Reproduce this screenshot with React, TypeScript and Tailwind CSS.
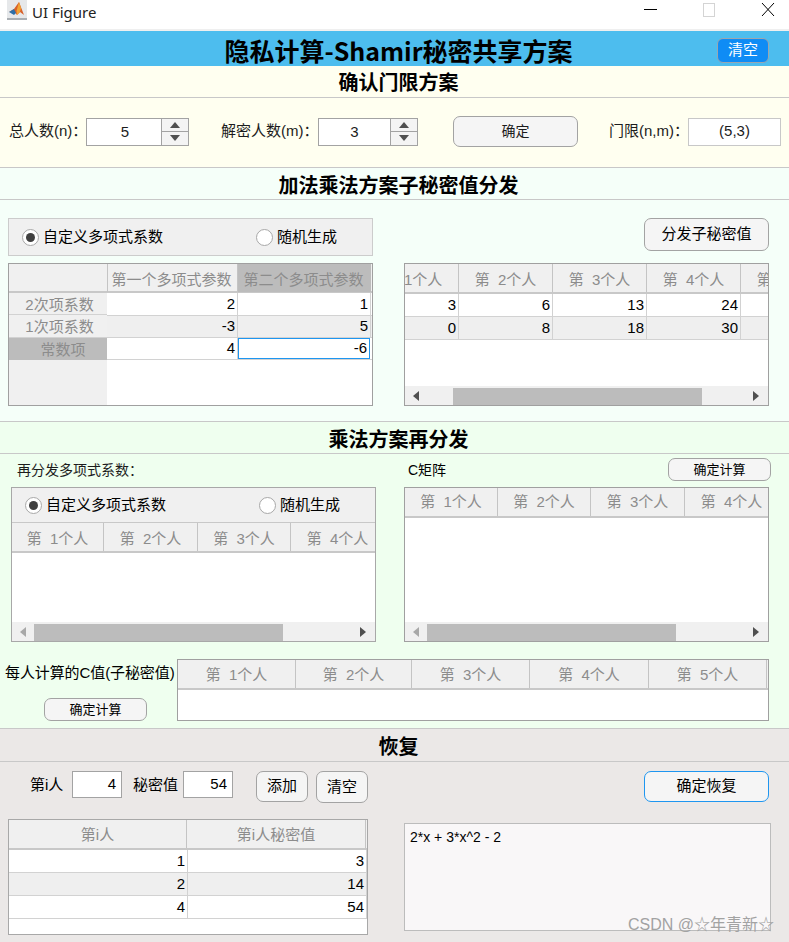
import React from "react";

function Caret({ dir, cls = "fill-[#505050]" }: { dir: "l" | "r" | "u" | "d"; cls?: string }) {
  const pts = { l: "7,0 7,10 1,5", r: "1,0 1,10 7,5", u: "0,7 10,7 5,1", d: "0,1 10,1 5,7" }[dir];
  return (
    <svg width={dir === "l" || dir === "r" ? 8 : 10} height={dir === "l" || dir === "r" ? 10 : 8} className={cls}>
      <polygon points={pts} />
    </svg>
  );
}

function Spinner({ value, widthCls, textCls }: { value: string; widthCls: string; textCls: string }) {
  return (
    <div className={`flex h-[28px] border border-[#a3a3a3] bg-white ${widthCls}`}>
      <div className={`flex h-full flex-1 items-center justify-center pt-[2px] text-[15px] ${textCls}`}>{value}</div>
      <div className="flex w-[27px] flex-col border-l border-[#a3a3a3] bg-[#f4f4f4]">
        <div className="flex h-[13px] items-center justify-center border-b border-[#a3a3a3]"><Caret dir="u" /></div>
        <div className="flex flex-1 items-center justify-center"><Caret dir="d" /></div>
      </div>
    </div>
  );
}

function Btn({ children, cls }: { children: React.ReactNode; cls: string }) {
  return (
    <div className={`flex shrink-0 items-center justify-center rounded-[7px] border border-[#a3a3a3] bg-[#f5f5f5] ${cls}`}>{children}</div>
  );
}

function Radio({ on }: { on?: boolean }) {
  return (
    <span className="flex h-[17px] w-[17px] shrink-0 items-center justify-center rounded-full border border-[#a8a8a8] bg-white">
      {on && <span className="h-[9px] w-[9px] rounded-full bg-[#404040]" />}
    </span>
  );
}

function RadioBar({ second, height, border }: { second: string; height: string; border: string }) {
  return (
    <div className={`flex shrink-0 items-center bg-[#f0f0f0] text-[15px] ${height} ${border}`}>
      <div className="ml-[13px] flex w-[234px] items-center gap-[4px] pt-[1px]"><Radio on /><span>自定义多项式系数</span></div>
      <div className="flex items-center gap-[4px]"><Radio /><span>{second}</span></div>
    </div>
  );
}

function PeopleHeader({ cols, shift = "", textPad = "pt-[3px]" }: { cols: [number, string][]; shift?: string; textPad?: string }) {
  return (
    <div className={`flex h-[30px] shrink-0 items-start overflow-hidden border-b-2 border-[#c8c8c8] bg-[#f0f0f0] ${shift}`}>
      {cols.map(([w, t], i) => (
        <div key={i} className={`flex h-[28px] shrink-0 items-center justify-center whitespace-pre border-r border-[#c4c4c4] text-[15px] text-[#8c8c8c] ${textPad}`} style={{ width: w }}>{t}</div>
      ))}
    </div>
  );
}

function Scrollbar({ thumb, offset, leftDim }: { thumb: string; offset: string; leftDim?: boolean }) {
  return (
    <div className="flex h-[19px] shrink-0 items-center bg-[#f0f0f0]">
      <div className="flex w-[22px] shrink-0 items-center justify-center">
        <Caret dir="l" cls={leftDim ? "fill-[#a8a8a8]" : "fill-[#505050]"} />
      </div>
      <div className={`flex-1 ${offset}`}>
        <div className={`mt-[2px] h-[17px] bg-[#bcbcbc] ${thumb}`} />
      </div>
      <div className="flex w-[24px] shrink-0 items-center justify-center"><Caret dir="r" /></div>
    </div>
  );
}

const people = (widths: number[]): [number, string][] =>
  widths.map((w, i) => [w, `第  ${i + 1}个人`] as [number, string]);

function CellRow({ vals, widths, shade, shift = "" }: { vals: string[]; widths: number[]; shade?: boolean; shift?: string }) {
  return (
    <div className={`flex h-[23px] items-center overflow-hidden border-b border-[#d2d2d2] ${shade ? "bg-[#efefef]" : "bg-white"} ${shift}`}>
      {vals.map((v, i) => (
        <div key={i} className="flex h-full shrink-0 items-center justify-end border-r border-[#d2d2d2] pr-[2px] text-[15px]" style={{ width: widths[i] }}>{v}</div>
      ))}
    </div>
  );
}

function SectionHead({ title, cls }: { title: string; cls: string }) {
  return (
    <div className={`flex items-center justify-center border-b border-[#c8c8c8] pl-[8px] text-[20px] font-bold ${cls}`}>{title}</div>
  );
}

function Logo() {
  return (
    <svg width="20" height="20" viewBox="0 0 20 20">
      <rect x="0" y="0" width="20" height="20" fill="#e6e8ea" />
      <rect x="0" y="18" width="20" height="2" fill="#a9aeb3" />
      <path d="M2 12 L7 9 L12 2 L17 15 L13 12 L10 15 L7 11.5 Z" fill="#d8602a" />
      <path d="M2 12 L7 9 L9 13 L7 15 Z" fill="#2d6fa8" />
      <path d="M12 2 L14 8 L13 12 L10 15 L9.5 11 Z" fill="#f2a534" />
    </svg>
  );
}

export default function App() {
  return (
    <div className="relative h-[942px] w-[789px] overflow-hidden bg-white font-['Liberation_Sans','Noto_Sans_CJK_SC',sans-serif] text-black">
      {/* window chrome */}
      <div className="flex h-[31px] items-start border-b-2 border-[#efefef] bg-white">
        <div className="ml-[7px]"><Logo /></div>
        <span className="ml-[5px] mt-[1px] font-['Noto_Sans','Liberation_Sans',sans-serif] text-[15px] text-[#222]">UI Figure</span>
        <div className="ml-auto flex">
          <div className="mr-[46px] mt-[9px] h-[1px] w-[13px] bg-black" />
          <div className="mr-[46px] mt-[3px] h-[14px] w-[12px] border border-[#d4d4d4]" />
          <svg width="14" height="15" className="mr-[14px] mt-[2px] stroke-black" fill="none"><path d="M1 1 L13 14 M13 1 L1 14" /></svg>
        </div>
      </div>

      {/* title */}
      <div className="relative flex h-[35px] items-center justify-center bg-[#4dbdee] pl-[8px]">
        <span className="mt-[5px] font-['Noto_Sans_CJK_SC',sans-serif] text-[25px] font-bold">隐私计算-Shamir秘密共享方案</span>
        <div className="absolute left-[717px] top-[7px] flex h-[25px] w-[52px] items-center justify-center rounded-[6px] border border-[#9aa6b0] bg-[#0f8cf5] text-[15px] text-white">清空</div>
      </div>

      {/* threshold */}
      <section className="h-[102px] border-b border-[#c8c8c8] bg-[#fffff0]">
        <SectionHead title="确认门限方案" cls="h-[32px] pt-[3px]" />
        <div className="flex items-center pl-[9px] pt-[18px] text-[15px] text-[#1c1c1c]">
          <span className="w-[77px] whitespace-nowrap">总人数(n)：</span>
          <Spinner value="5" widthCls="w-[103px]" textCls="pl-[2px]" />
          <span className="ml-[32px] w-[97px] whitespace-nowrap">解密人数(m)：</span>
          <Spinner value="3" widthCls="w-[100px]" textCls="" />
          <Btn cls="ml-[35px] h-[31px] w-[125px] text-[14px]">确定</Btn>
          <span className="ml-[31px] w-[79px] whitespace-nowrap">门限(n,m)：</span>
          <div className="flex h-[28px] w-[93px] items-center justify-center border border-[#c8c8c8] bg-white text-[15px]">(5,3)</div>
        </div>
      </section>

      {/* distribute */}
      <section className="h-[254px] border-b border-[#c8c8c8] bg-[#f5fff9]">
        <SectionHead title="加法乘法方案子秘密值分发" cls="h-[32px] pt-[4px]" />
        <div className="flex gap-[31px] pl-[8px] pt-[18px]">
          <div className="w-[365px]">
            <RadioBar second="随机生成" height="h-[38px]" border="border border-[#cccccc]" />
            <div className="mt-[7px] flex h-[143px] border border-[#a0a0a0] bg-white">
              <div className="flex w-[98px] shrink-0 flex-col bg-[#f0f0f0] text-[15px] text-[#8c8c8c]">
                <div className="h-[29px] border-b-2 border-[#c8c8c8]" />
                <div className="flex h-[22px] items-center justify-center border-b border-[#d2d2d2] pl-[3px] pt-[3px]">2次项系数</div>
                <div className="flex h-[23px] items-center justify-center border-b border-[#d2d2d2] pl-[3px] pt-[2px]">1次项系数</div>
                <div className="flex h-[22px] items-center justify-center bg-[#bcbcbc] pl-[10px] pt-[2px]">常数项</div>
              </div>
              <div className="flex-1">
                <div className="flex h-[29px] border-b-2 border-[#c8c8c8] bg-[#f0f0f0] text-[15px] text-[#8c8c8c]">
                  <div className="flex h-[28px] w-[131px] items-center justify-center whitespace-nowrap border-l border-r border-[#c4c4c4] pr-[2px] pt-[5px]">第一个多项式参数</div>
                  <div className="flex h-[28px] w-[133px] items-center justify-center whitespace-nowrap bg-[#bcbcbc] pr-[2px] pt-[5px]">第二个多项式参数</div>
                </div>
                {[["2", "1"], ["-3", "5"]].map((r, i) => (
                  <div key={i} className={`flex h-[22.5px] items-center border-b border-[#d2d2d2] text-[15px] ${i ? "bg-[#efefef]" : ""}`}>
                    <div className="flex h-full w-[131px] items-center justify-end border-r border-[#d2d2d2] pr-[2px]">{r[0]}</div>
                    <div className="flex h-full w-[133px] items-center justify-end border-r border-[#d2d2d2] pr-[2px]">{r[1]}</div>
                  </div>
                ))}
                <div className="flex h-[22px] items-center border-b border-[#d2d2d2] text-[15px]">
                  <div className="flex h-full w-[131px] items-center justify-end border-r border-[#d2d2d2] pr-[2px]">4</div>
                  <div className="flex h-full w-[132px] items-center justify-end border border-[#1e96f0] pr-[2px]">-6</div>
                </div>
              </div>
            </div>
          </div>
          <div className="w-[365px]">
            <div className="flex justify-end">
              <Btn cls="h-[33px] w-[125px] text-[15px]">分发子秘密值</Btn>
            </div>
            <div className="mt-[12px] flex h-[143px] flex-col overflow-hidden border border-[#a0a0a0] bg-white">
              <div className="overflow-hidden">
                <PeopleHeader cols={people([94, 94, 94, 94, 94])} shift="ml-[-40px]" textPad="pt-[5px]" />
              </div>
              <CellRow vals={["3", "6", "13", "24", ""]} widths={[94, 94, 94, 94, 94]} shift="ml-[-40px]" />
              <CellRow vals={["0", "8", "18", "30", ""]} widths={[94, 94, 94, 94, 94]} shade shift="ml-[-40px]" />
              <div className="flex-1" />
              <Scrollbar thumb="w-[249px]" offset="pl-[26px]" />
            </div>
          </div>
        </div>
      </section>

      {/* reshare */}
      <section className="h-[307px] border-b border-[#c8c8c8] bg-[#efffef]">
        <SectionHead title="乘法方案再分发" cls="h-[32px] pt-[4px]" />
        <div className="flex pl-[11px]">
          <div className="w-[365px]">
            <div className="flex h-[33px] items-center pb-[1px] pl-[6px] text-[14px] text-[#1c1c1c]">再分发多项式系数：</div>
            <div className="flex h-[155px] flex-col border border-[#a8a8a8] bg-white">
              <RadioBar second="随机生成" height="h-[35px]" border="border-b border-[#c8c8c8]" />
              <PeopleHeader cols={people([92, 94, 93, 94])} textPad="pt-[4px]" />
              <div className="flex-1" />
              <Scrollbar thumb="w-[249px]" offset="" leftDim />
            </div>
          </div>
          <div className="ml-[28px] w-[367px]">
            <div className="flex h-[33px] items-start">
              <span className="ml-[4px] mt-[6px] text-[14px]">C矩阵</span>
              <Btn cls="ml-auto mt-[4px] h-[23px] w-[103px] text-[13px]">确定计算</Btn>
            </div>
            <div className="flex h-[155px] w-[365px] flex-col border border-[#a0a0a0] bg-white">
              <PeopleHeader cols={people([93, 93, 94, 94])} textPad="pt-[1px]" />
              <div className="flex-1" />
              <Scrollbar thumb="w-[249px]" offset="" leftDim />
            </div>
          </div>
        </div>
        <div className="mt-[17px] flex">
          <div className="w-[177px] shrink-0 pl-[5px]">
            <div className="mt-[3px] h-[24px] whitespace-nowrap text-[15px] tracking-[-0.1px]">每人计算的C值(子秘密值)</div>
            <Btn cls="ml-[39px] mt-[12px] h-[23px] w-[103px] text-[13px]">确定计算</Btn>
          </div>
          <div className="flex h-[62px] w-[592px] flex-col border border-[#a0a0a0] bg-white">
            <PeopleHeader cols={people([118, 116, 118, 119, 118])} />
          </div>
        </div>
      </section>

      {/* recover */}
      <section className="h-[213px] bg-[#ebe8e7]">
        <SectionHead title="恢复" cls="h-[33px] pt-[3px]" />
        <div className="flex items-start pl-[30px] pt-[9px] text-[15px]">
          <span className="mt-[3px] w-[42px]">第i人</span>
          <div className="flex h-[27px] w-[50px] items-center justify-end border border-[#a3a3a3] bg-white pr-[5px]">4</div>
          <span className="ml-[11px] mt-[3px] w-[50px] whitespace-nowrap">秘密值</span>
          <div className="flex h-[27px] w-[50px] items-center justify-end border border-[#a3a3a3] bg-white pr-[5px]">54</div>
          <Btn cls="ml-[23px] h-[31px] w-[52px]">添加</Btn>
          <Btn cls="ml-[8px] h-[32px] w-[52px]">清空</Btn>
          <Btn cls="ml-[276px] h-[31px] w-[125px] !border-[#1e96f0]">确定恢复</Btn>
        </div>
        <div className="mt-[16px] flex items-start pl-[8px]">
          <div className="flex h-[116px] w-[360px] flex-col border border-[#a8a8a8] bg-white">
            <div className="flex h-[30px] shrink-0 items-start border-b-2 border-[#c8c8c8] bg-[#f0f0f0] text-[15px] text-[#8c8c8c]">
              <div className="flex h-[28px] w-[178px] items-center justify-center border-r border-[#c4c4c4] pt-[2px]">第i人</div>
              <div className="flex h-[28px] w-[179px] items-center justify-center border-r border-[#c4c4c4] pt-[2px]">第i人秘密值</div>
            </div>
            <CellRow vals={["1", "3"]} widths={[179, 179]} />
            <CellRow vals={["2", "14"]} widths={[179, 179]} shade />
            <CellRow vals={["4", "54"]} widths={[179, 179]} />
          </div>
          <div className="ml-[36px] mt-[4px] h-[108px] w-[367px] border border-[#bcbcbc] bg-[#f9f7f8] pl-[5px] pt-[3px] text-[14px]">2*x + 3*x^2 - 2</div>
        </div>
      </section>

      {/* watermark */}
      <span className="absolute left-[628px] top-[913px] whitespace-nowrap text-[16px] text-[#a2a2a2]">CSDN @☆年青新☆</span>
    </div>
  );
}
